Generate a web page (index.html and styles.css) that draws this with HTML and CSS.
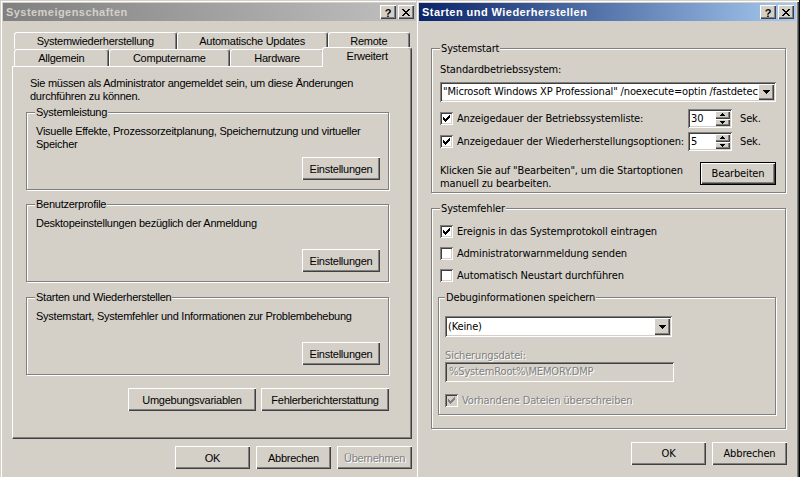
FILE: index.html
```html
<!DOCTYPE html>
<html lang="de">
<head>
<meta charset="utf-8">
<title>Systemeigenschaften</title>
<link rel="stylesheet" href="styles.css">
</head>
<body>
<div class="win win-left">
  <div class="titlebar inactive">
    <span class="title">Systemeigenschaften</span>
    <span class="tbtns">
      <span class="tbtn help">?</span>
      <span class="tbtn close"><svg width="8" height="7" viewBox="0 0 8 7"><path d="M0 0h2v1H0zM6 0h2v1H6zM1 1h2v1H1zM5 1h2v1H5zM2 2h4v1H2zM3 3h2v1H3zM2 4h4v1H2zM1 5h2v1H1zM5 5h2v1H5zM0 6h2v1H0zM6 6h2v1H6z"/></svg></span>
    </span>
  </div>
  <div class="lbody">
    <div class="tabrow">
      <div class="tab">Systemwiederherstellung</div>
      <div class="tab">Automatische Updates</div>
      <div class="tab">Remote</div>
    </div>
    <div class="tabrow">
      <div class="tab">Allgemein</div>
      <div class="tab">Computername</div>
      <div class="tab">Hardware</div>
      <div class="tab sel">Erweitert</div>
    </div>
    <div class="panel">
      <p class="intro">Sie müssen als Administrator angemeldet sein, um diese Änderungen<br>durchführen zu können.</p>
      <div class="lgroup first">
        <span class="legend">Systemleistung</span>
        <p class="gtext">Visuelle Effekte, Prozessorzeitplanung, Speichernutzung und virtueller<br>Speicher</p>
        <div class="btn lbtn">Einstellungen</div>
      </div>
      <div class="lgroup">
        <span class="legend">Benutzerprofile</span>
        <p class="gtext">Desktopeinstellungen bezüglich der Anmeldung</p>
        <div class="btn lbtn">Einstellungen</div>
      </div>
      <div class="lgroup third">
        <span class="legend">Starten und Wiederherstellen</span>
        <p class="gtext">Systemstart, Systemfehler und Informationen zur Problembehebung</p>
        <div class="btn lbtn">Einstellungen</div>
      </div>
      <div class="envrow">
        <div class="btn wide">Umgebungsvariablen</div>
        <div class="btn wide">Fehlerberichterstattung</div>
      </div>
    </div>
    <div class="dlgbtns">
      <div class="btn dbtn">OK</div>
      <div class="btn dbtn">Abbrechen</div>
      <div class="btn dbtn disabled">Übernehmen</div>
    </div>
  </div>
</div>

<div class="win win-right">
  <div class="titlebar active">
    <span class="title">Starten und Wiederherstellen</span>
    <span class="tbtns">
      <span class="tbtn help">?</span>
      <span class="tbtn close"><svg width="8" height="7" viewBox="0 0 8 7"><path d="M0 0h2v1H0zM6 0h2v1H6zM1 1h2v1H1zM5 1h2v1H5zM2 2h4v1H2zM3 3h2v1H3zM2 4h4v1H2zM1 5h2v1H1zM5 5h2v1H5zM0 6h2v1H0zM6 6h2v1H6z"/></svg></span>
    </span>
  </div>
  <div class="rbody">
    <div class="rgroup g-start">
      <span class="legend">Systemstart</span>
      <div class="label l-os">Standardbetriebssystem:</div>
      <div class="combo c-os">
        <span class="ctext">"Microsoft Windows XP Professional" /noexecute=optin /fastdetect</span>
        <span class="dd"><svg width="7" height="4" viewBox="0 0 7 4"><path d="M0 0h7v1H0zM1 1h5v1H1zM2 2h3v1H2zM3 3h1v1H3z"/></svg></span>
      </div>
      <div class="cbrow spinrow r1">
        <span class="cb"><svg width="7" height="7" viewBox="0 0 7 7"><path d="M0 2h1v3H0zM1 3h1v3H1zM2 4h1v3H2zM3 3h1v3H3zM4 2h1v3H4zM5 1h1v3H5zM6 0h1v3H6z"/></svg></span>
        <span class="cblabel">Anzeigedauer der Betriebssystemliste:</span>
        <span class="spin"><span class="spintext">30</span><span class="spinbtns"><span class="sb"><svg width="5" height="3" viewBox="0 0 5 3"><path d="M2 0h1v1H2zM1 1h3v1H1zM0 2h5v1H0z"/></svg></span><span class="sb"><svg width="5" height="3" viewBox="0 0 5 3"><path d="M0 0h5v1H0zM1 1h3v1H1zM2 2h1v1H2z"/></svg></span></span></span>
        <span class="sek">Sek.</span>
      </div>
      <div class="cbrow spinrow r2">
        <span class="cb"><svg width="7" height="7" viewBox="0 0 7 7"><path d="M0 2h1v3H0zM1 3h1v3H1zM2 4h1v3H2zM3 3h1v3H3zM4 2h1v3H4zM5 1h1v3H5zM6 0h1v3H6z"/></svg></span>
        <span class="cblabel">Anzeigedauer der Wiederherstellungsoptionen:</span>
        <span class="spin"><span class="spintext">5</span><span class="spinbtns"><span class="sb"><svg width="5" height="3" viewBox="0 0 5 3"><path d="M2 0h1v1H2zM1 1h3v1H1zM0 2h5v1H0z"/></svg></span><span class="sb"><svg width="5" height="3" viewBox="0 0 5 3"><path d="M0 0h5v1H0zM1 1h3v1H1zM2 2h1v1H2z"/></svg></span></span></span>
        <span class="sek">Sek.</span>
      </div>
      <div class="editrow">
        <p class="edittext">Klicken Sie auf "Bearbeiten", um die Startoptionen<br>manuell zu bearbeiten.</p>
        <div class="btn def rbtn">Bearbeiten</div>
      </div>
    </div>

    <div class="rgroup g-err">
      <span class="legend">Systemfehler</span>
      <div class="cbrow e1">
        <span class="cb"><svg width="7" height="7" viewBox="0 0 7 7"><path d="M0 2h1v3H0zM1 3h1v3H1zM2 4h1v3H2zM3 3h1v3H3zM4 2h1v3H4zM5 1h1v3H5zM6 0h1v3H6z"/></svg></span>
        <span class="cblabel">Ereignis in das Systemprotokoll eintragen</span>
      </div>
      <div class="cbrow e2">
        <span class="cb"></span>
        <span class="cblabel">Administratorwarnmeldung senden</span>
      </div>
      <div class="cbrow e3">
        <span class="cb"></span>
        <span class="cblabel">Automatisch Neustart durchführen</span>
      </div>
      <div class="rgroup g-debug">
        <span class="legend">Debuginformationen speichern</span>
        <div class="combo c-debug">
          <span class="ctext">(Keine)</span>
          <span class="dd"><svg width="7" height="4" viewBox="0 0 7 4"><path d="M0 0h7v1H0zM1 1h5v1H1zM2 2h3v1H2zM3 3h1v1H3z"/></svg></span>
        </div>
        <div class="label dis l-dump">Sicherungsdatei:</div>
        <div class="field dis">%SystemRoot%\MEMORY.DMP</div>
        <div class="cbrow e4">
          <span class="cb dis"><svg width="7" height="7" viewBox="0 0 7 7"><path d="M0 2h1v3H0zM1 3h1v3H1zM2 4h1v3H2zM3 3h1v3H3zM4 2h1v3H4zM5 1h1v3H5zM6 0h1v3H6z"/></svg></span>
          <span class="cblabel dis">Vorhandene Dateien überschreiben</span>
        </div>
      </div>
    </div>

    <div class="dlgbtns rdlg">
      <div class="btn dbtn">OK</div>
      <div class="btn dbtn">Abbrechen</div>
    </div>
  </div>
</div>
</body>
</html>
```

FILE: styles.css
```css
* { box-sizing: border-box; }
html, body { margin: 0; padding: 0; }
body {
  width: 800px;
  height: 477px;
  overflow: hidden;
  position: relative;
  background: #000;
  font-family: "Liberation Sans", Arial, sans-serif;
  font-size: 11px;
  color: #000;
}
p { margin: 0; }

/* windows */
.win {
  position: absolute;
  top: 0;
  height: 500px;
  padding: 3px;
  background: #d4d0c8;
  box-shadow: inset 1px 1px #d4d0c8, inset 2px 2px #fff, inset -1px -1px #404040, inset -2px -2px #808080;
}
.win-left { left: 0; width: 419px; letter-spacing: -0.25px; }
.win-right { left: 416px; width: 383px; font-family: "DejaVu Sans Condensed", "Liberation Sans", Arial, sans-serif; letter-spacing: -0.15px; }

.titlebar {
  height: 18px;
  display: flex;
  align-items: center;
  justify-content: space-between;
  padding: 0 2px 0 3px;
  font-family: "Liberation Sans", Arial, sans-serif;
  font-weight: bold;
  font-size: 11px;
  letter-spacing: 0.45px;
}
.titlebar.inactive { background: linear-gradient(to right, #808080, #c0c0c0); color: #d4d0c8; }
.titlebar.active { background: linear-gradient(to right, #0a246a, #a6caf0); color: #fff; }
.tbtns { display: flex; gap: 2px; }
.tbtn {
  width: 16px;
  height: 14px;
  display: flex;
  align-items: center;
  justify-content: center;
  background: #d4d0c8;
  color: #000;
  font-size: 11px;
  letter-spacing: 0;
  box-shadow: inset 1px 1px #fff, inset -1px -1px #404040, inset -2px -2px #808080;
}
.tbtn.help { padding-top: 1px; }
.tbtn svg { display: block; fill: #000; }

/* buttons */
.btn {
  height: 23px;
  display: flex;
  align-items: center;
  justify-content: center;
  background: #d4d0c8;
  box-shadow: inset 1px 1px #fff, inset -1px -1px #404040, inset -2px -2px #808080;
  white-space: nowrap;
}
.btn.def {
  box-shadow: inset 0 0 0 1px #000, inset 2px 2px #fff, inset -2px -2px #404040, inset -3px -3px #808080;
}
.btn.disabled { color: #808080; text-shadow: 1px 1px 0 #fff; }
.dbtn { width: 75px; }

/* left dialog */
.lbody { padding: 11px 4px 0 9px; }
.tabrow { display: flex; margin: 0 2px; height: 17px; }
.tab {
  flex: 1 1 auto;
  height: 17px;
  padding-top: 2px;
  line-height: 13px;
  text-align: center;
  white-space: nowrap;
  border: 1px solid;
  border-bottom: 0;
  border-color: #fff #404040 transparent #fff;
  border-radius: 3px 3px 0 0;
  box-shadow: inset -1px 0 #808080;
  background: #d4d0c8;
}
.tab.sel {
  position: relative;
  z-index: 1;
  height: 20px;
  margin: -2px -2px -1px -2px;
}
.panel {
  height: 373px;
  padding: 10px 22px 0 13px;
  border: 1px solid;
  border-color: #fff #404040 #404040 #fff;
  box-shadow: inset -1px -1px #808080;
}
.intro { margin-left: 4px; line-height: 13px; }
.legend {
  display: inline-block;
  align-self: flex-start;
  height: 13px;
  line-height: 13px;
  margin-top: -7px;
  padding: 0 1px;
  background: #d4d0c8;
}
.lgroup {
  height: 78px;
  margin-top: 14px;
  display: flex;
  flex-direction: column;
  padding: 0 8px 9px 8px;
  border: 1px solid #808080;
  box-shadow: inset 1px 1px #fff, 1px 1px #fff;
}
.lgroup.first { margin-top: 9px; }
.lgroup.third { margin-top: 15px; }
.gtext { margin-top: 6px; margin-left: 1px; line-height: 13px; }
.lbtn { width: 78px; margin-top: auto; align-self: flex-end; }
.envrow { display: flex; justify-content: flex-end; gap: 5px; margin-top: 13px; }
.btn.wide { width: 128px; }
.dlgbtns { display: flex; justify-content: flex-end; gap: 6px; margin-top: 7px; }

/* right dialog */
.rbody { padding: 27px 10px 0 12px; }
.rgroup {
  display: flex;
  flex-direction: column;
  padding: 0 9px 0 8px;
  border: 1px solid #808080;
  box-shadow: inset 1px 1px #fff, 1px 1px #fff;
}
.g-start { height: 145px; }
.g-err { height: 221px; margin-top: 15px; }
.label { line-height: 13px; white-space: nowrap; }
.l-os { margin-top: 8px; }
.dis { color: #808080; text-shadow: 1px 1px 0 #fff; }

.combo {
  display: flex;
  align-items: stretch;
  height: 20px;
  padding: 2px;
  background: #fff;
  box-shadow: inset 1px 1px #808080, inset -1px -1px #fff, inset 2px 2px #404040, inset -2px -2px #d4d0c8;
}
.c-os { margin-top: 6px; }
.ctext {
  flex: 1 1 auto;
  overflow: hidden;
  white-space: nowrap;
  line-height: 16px;
  padding-left: 1px;
}
.dd {
  flex: 0 0 16px;
  display: flex;
  align-items: center;
  justify-content: center;
  background: #d4d0c8;
  box-shadow: inset 1px 1px #fff, inset -1px -1px #404040, inset -2px -2px #808080;
}
.dd svg { display: block; fill: #000; }

.cbrow { display: flex; align-items: center; white-space: nowrap; }
.cb {
  flex: 0 0 13px;
  width: 13px;
  height: 13px;
  display: flex;
  align-items: center;
  justify-content: center;
  background: #fff;
  box-shadow: inset 1px 1px #808080, inset -1px -1px #fff, inset 2px 2px #404040, inset -2px -2px #d4d0c8;
}
.cb svg { display: block; fill: #000; }
.cb.dis { background: #d4d0c8; }
.cb.dis svg { fill: #808080; }
.cblabel { margin-left: 4px; line-height: 13px; }
.spinrow { height: 19px; }
.spinrow .cblabel { flex: 1 1 auto; }
.r1 { margin-top: 7px; }
.r2 { margin-top: 4px; }
.spin {
  flex: 0 0 44px;
  height: 19px;
  display: flex;
  padding: 2px;
  background: #fff;
  box-shadow: inset 1px 1px #808080, inset -1px -1px #fff, inset 2px 2px #404040, inset -2px -2px #d4d0c8;
}
.spintext { flex: 1 1 auto; line-height: 15px; padding-left: 1px; }
.spinbtns { flex: 0 0 15px; display: flex; flex-direction: column; }
.sb {
  flex: 1 1 0;
  display: flex;
  align-items: center;
  justify-content: center;
  background: #d4d0c8;
  box-shadow: inset 1px 1px #fff, inset -1px -1px #404040, inset -2px -2px #808080;
}
.sb svg { display: block; fill: #000; }
.sek { flex: 0 0 36px; margin-left: 8px; line-height: 13px; }

.editrow { display: flex; justify-content: space-between; align-items: flex-start; margin-top: 11px; }
.edittext { line-height: 13px; margin-top: 2px; white-space: nowrap; }
.rbtn { width: 76px; }

.e1 { margin-top: 10px; }
.e2 { margin-top: 9px; }
.e3 { margin-top: 9px; }
.g-debug { height: 118px; margin-top: 15px; margin-left: -2px; margin-right: 0; padding: 0 6px; }
.c-debug { margin-top: 12px; height: 21px; width: 227px; }
.c-debug .ctext { line-height: 17px; }
.l-dump { margin-top: 13px; line-height: 12px; }
.field {
  width: 229px;
  height: 20px;
  margin-top: 0;
  padding: 2px 4px;
  line-height: 16px;
  background: #d4d0c8;
  box-shadow: inset 1px 1px #808080, inset -1px -1px #fff, inset 2px 2px #404040, inset -2px -2px #d4d0c8;
}
.e4 { margin-top: 12px; }
.rdlg { margin-top: 13px; margin-right: -1px; }
```
